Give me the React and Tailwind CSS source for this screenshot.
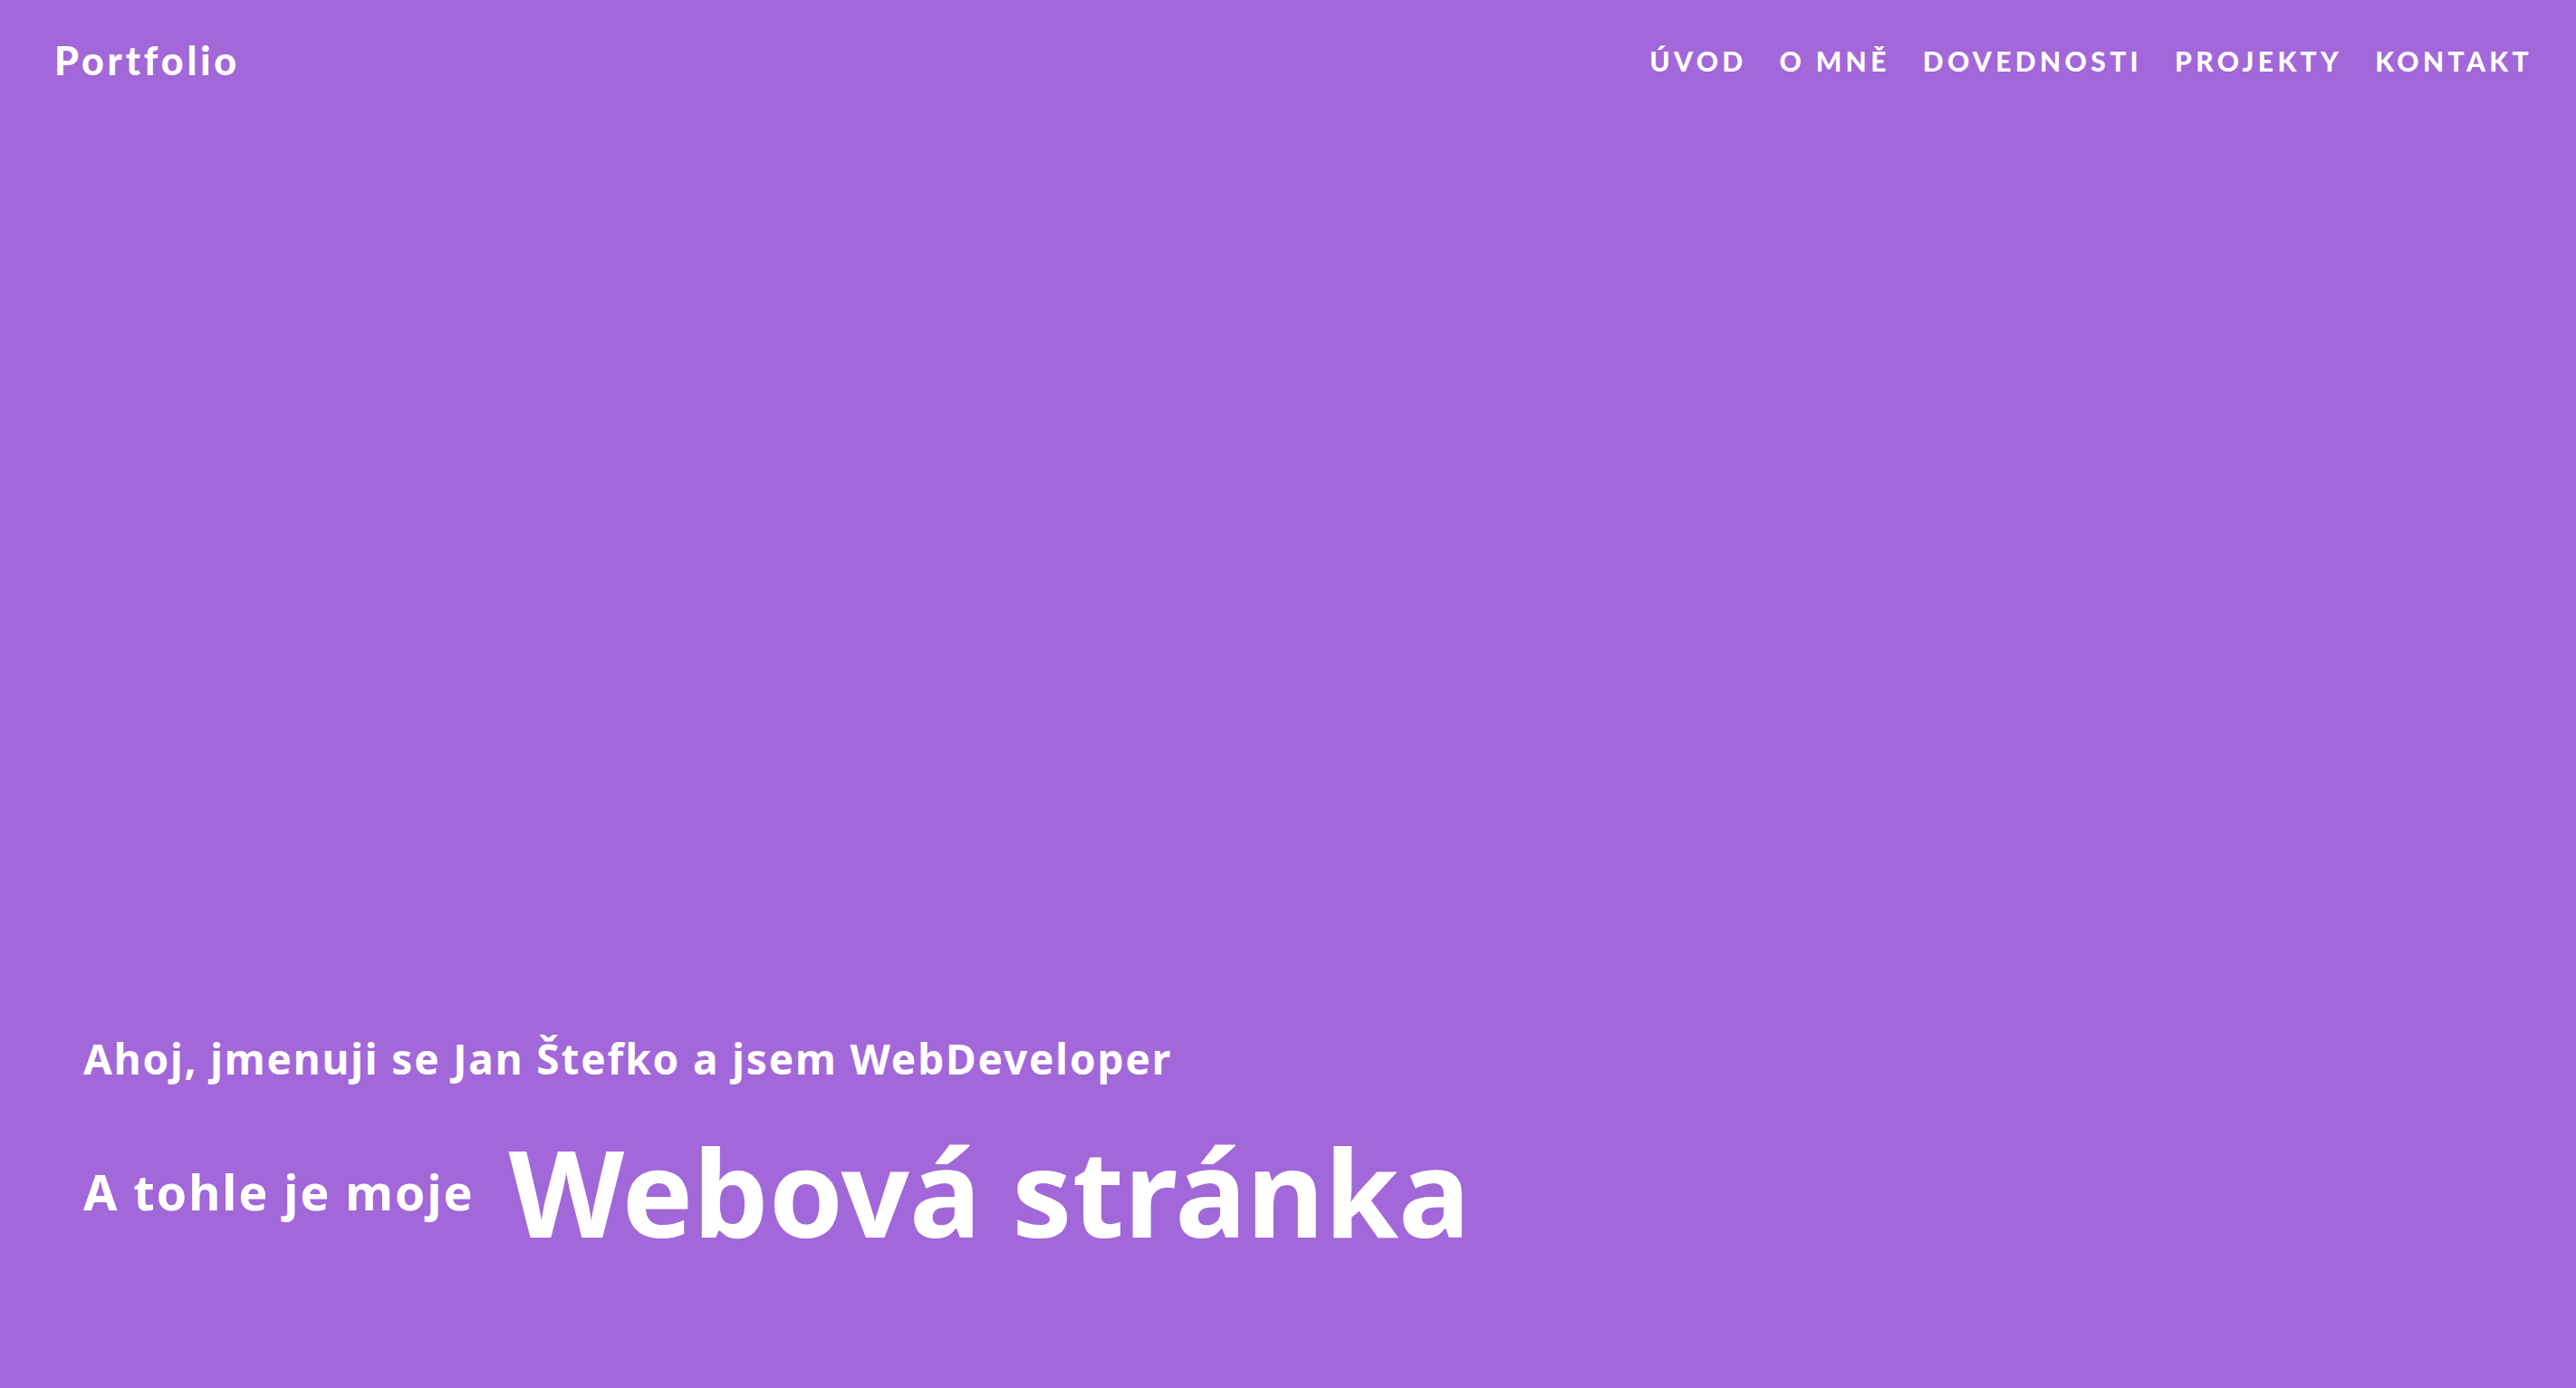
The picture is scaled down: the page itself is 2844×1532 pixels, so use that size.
export default function App() {
  const links = ['Úvod', 'O mně', 'Dovednosti', 'Projekty', 'Kontakt']
  return (
    <div className="min-h-screen bg-[#a267d9] text-white flex flex-col" style={{ fontFamily: 'Lato, sans-serif' }}>
      <header className="flex items-center justify-between pl-[60px] pr-[48px] pt-[45px]">
        <a href="#" className="text-[43px] leading-none font-black tracking-[0.09em]">Portfolio</a>
        <nav className="flex items-center gap-[36px]">
          {links.map((l) => (
            <a key={l} href="#" className="text-[30px] leading-none font-black uppercase tracking-[0.145em]">
              {l}
            </a>
          ))}
        </nav>
      </header>

      <main className="flex-1 flex flex-col justify-end pl-[92px] pb-[151px]" style={{ fontFamily: '"Noto Sans", sans-serif' }}>
        <p className="text-[46px] leading-none font-bold tracking-[0.04em] mb-[58px]">
          Ahoj, jmenuji se Jan Štefko a jsem WebDeveloper
        </p>
        <div className="flex items-center gap-[38px]">
          <span className="text-[54px] leading-none font-bold tracking-[0.035em]">A tohle je moje</span>
          <h1 className="text-[132px] leading-none font-bold">Webová stránka</h1>
        </div>
      </main>
    </div>
  )
}
